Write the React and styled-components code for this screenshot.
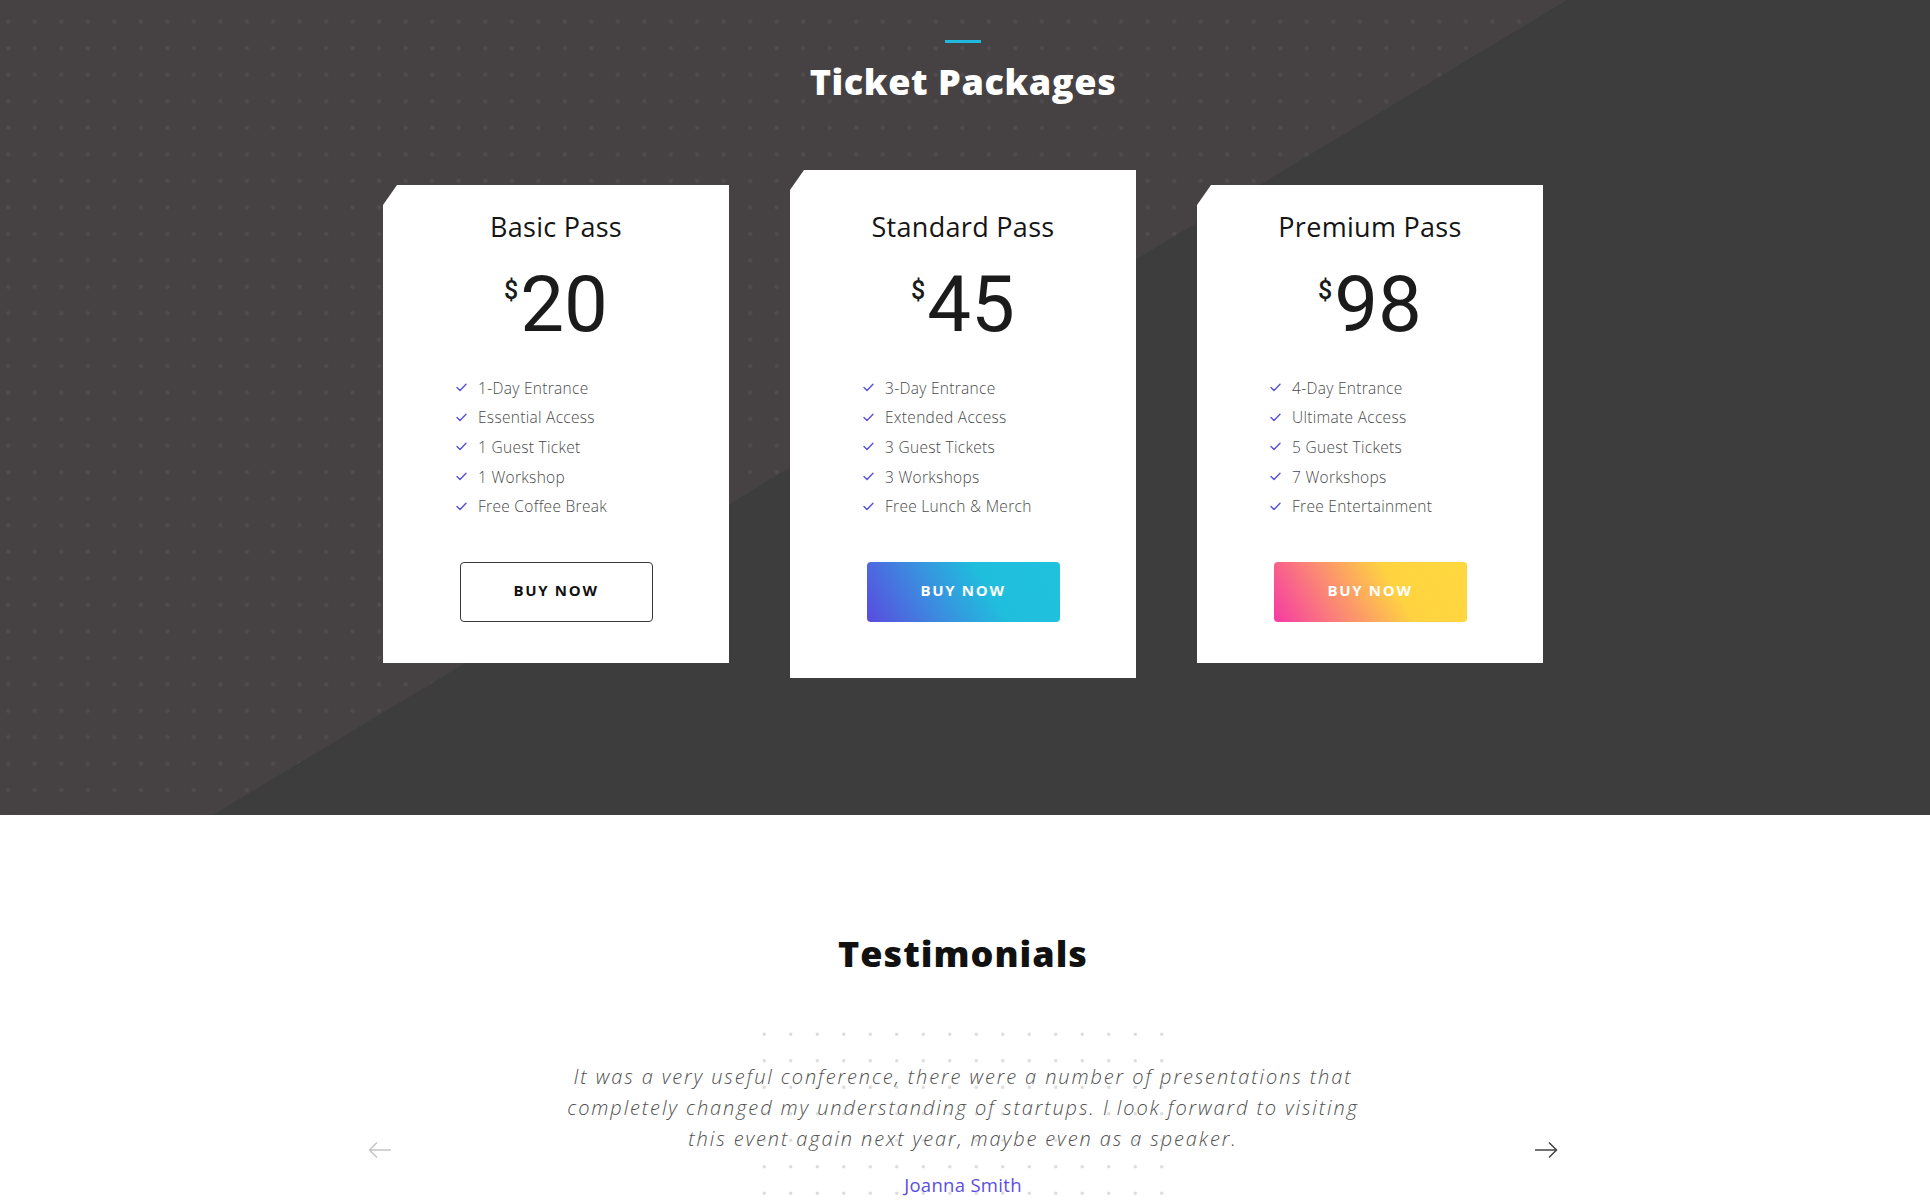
import React from "react";
import styled, { createGlobalStyle } from "styled-components";

const GlobalStyle = createGlobalStyle`
  html, body {
    margin: 0;
    padding: 0;
    background: #fff;
  }
  body {
    font-family: "Open Sans", "Liberation Sans", sans-serif;
    -webkit-font-smoothing: antialiased;
  }
  * {
    box-sizing: border-box;
  }
`;

const packages = [
  {
    name: "Basic Pass",
    price: 20,
    variant: "outline",
    features: [
      "1-Day Entrance",
      "Essential Access",
      "1 Guest Ticket",
      "1 Workshop",
      "Free Coffee Break",
    ],
  },
  {
    name: "Standard Pass",
    price: 45,
    variant: "blue",
    featured: true,
    features: [
      "3-Day Entrance",
      "Extended Access",
      "3 Guest Tickets",
      "3 Workshops",
      "Free Lunch & Merch",
    ],
  },
  {
    name: "Premium Pass",
    price: 98,
    variant: "sunset",
    features: [
      "4-Day Entrance",
      "Ultimate Access",
      "5 Guest Tickets",
      "7 Workshops",
      "Free Entertainment",
    ],
  },
];

/* ---------- ticket packages ---------- */

const PricingSection = styled.section`
  position: relative;
  height: 815px;
  padding: 40px 4px 0 0;
  background: #3d3d3d;
  overflow: hidden;

  /* lighter dotted triangle behind the content */
  &::before {
    content: "";
    position: absolute;
    inset: 0;
    background-color: #464243;
    background-image: radial-gradient(circle, #514d4e 1.7px, transparent 2.4px);
    background-size: 26.5px 26.5px;
    background-position: -5px 8.5px;
    clip-path: polygon(0 0, 1567px 0, 213px 815px, 0 815px);
  }
`;

const Inner = styled.div`
  position: relative;
  z-index: 1;
  display: flex;
  flex-direction: column;
  align-items: center;
`;

const AccentBar = styled.span`
  display: block;
  width: 36px;
  height: 3px;
  background: #1fb9dd;
`;

const SectionTitle = styled.h2`
  margin: ${(p) => p.$mt || "0"} 0 0;
  font-size: 36px;
  line-height: 43px;
  font-weight: 800;
  letter-spacing: ${(p) => (p.$light ? "0.6px" : "1px")};
  color: ${(p) => (p.$light ? "#fff" : "#111")};
`;

const CardRow = styled.div`
  display: flex;
  align-items: center;
  justify-content: center;
  gap: 61px;
  margin-top: 67px;
`;

const Card = styled.div`
  width: 346px;
  background: #fff;
  padding: ${(p) => (p.$featured ? "40px 0 56px" : "25px 0 41px")};
  display: flex;
  flex-direction: column;
  align-items: center;
  clip-path: polygon(14px 0, 100% 0, 100% 100%, 0 100%, 0 20px);
`;

const CardTitle = styled.h3`
  margin: 0;
  font-size: 27px;
  line-height: 34px;
  font-weight: 500;
  letter-spacing: 0.3px;
  color: #151515;
`;

const Price = styled.div`
  display: flex;
  align-items: flex-start;
  margin-top: 23px;
  font-family: Roboto, "Liberation Sans", sans-serif;
  color: #1b1b1b;
`;

const Currency = styled.span`
  font-size: 25px;
  line-height: 25px;
  font-weight: 500;
  margin: 11px 2px 0 0;
`;

const Amount = styled.span`
  font-size: 78px;
  line-height: 76px;
  font-weight: 400;
`;

const FeatureList = styled.ul`
  align-self: stretch;
  list-style: none;
  margin: 30px 0 0;
  padding: 0 0 0 73px;
`;

const Feature = styled.li`
  display: flex;
  align-items: center;
  gap: 11px;
  height: 29.6px;
  font-size: 15.5px;
  font-weight: 300;
  letter-spacing: 0.3px;
  color: #4a4a4a;
`;

const buttonSkins = {
  outline: `
    background: #fff;
    border: 1px solid #3a3a3a;
    color: #111;
  `,
  blue: `
    background: linear-gradient(60deg, #5a4bdf 0%, #3a8fe0 35%, #1fbedd 62%, #1fc2dd 100%);
    border: none;
    color: #fff;
  `,
  sunset: `
    background: linear-gradient(60deg, #f63aa4 0%, #fb8a73 32%, #ffd340 62%, #ffd83e 100%);
    border: none;
    color: #fff;
  `,
};

const BuyButton = styled.button`
  width: 193px;
  height: 60px;
  margin-top: 41px;
  padding: 0 0 4px;
  border-radius: 4px;
  font-family: "Open Sans", "Liberation Sans", sans-serif;
  font-size: 15px;
  font-weight: 700;
  letter-spacing: 1.7px;
  cursor: pointer;
  ${(p) => buttonSkins[p.$variant]}
`;

const CheckIcon = () => (
  <svg width="11" height="9" viewBox="0 0 11 9" fill="none">
    <path d="M1 4.6 L4 7.6 L10 1.2" stroke="#5a50e0" strokeWidth="1.4" strokeLinecap="round" strokeLinejoin="round" />
  </svg>
);

/* ---------- testimonials ---------- */

const TestimonialSection = styled.section`
  padding: 117px 4px 0 0;
  background: #fff;
  display: flex;
  flex-direction: column;
  align-items: center;
`;

const Slider = styled.div`
  width: 1190px;
  margin-top: 86px;
  display: flex;
  justify-content: space-between;
  align-items: flex-start;
`;

const ArrowButton = styled.button`
  margin-top: 80px;
  padding: 0;
  border: none;
  background: none;
  color: ${(p) => (p.$dim ? "#c4c4c4" : "#444")};
  cursor: pointer;
  display: flex;
`;

const QuoteBlock = styled.div`
  position: relative;
  width: 810px;
  text-align: center;

  /* dotted square behind the quote */
  &::before {
    content: "";
    position: absolute;
    top: -40px;
    left: 50%;
    width: 424px;
    height: 200px;
    transform: translateX(-50%);
    background-image: radial-gradient(circle, #dcdcdc 1.5px, transparent 2px);
    background-size: 26.5px 26.5px;
  }
`;

const QuoteText = styled.p`
  position: relative;
  margin: 0;
  font-size: 20px;
  line-height: 31px;
  font-style: italic;
  font-weight: 300;
  letter-spacing: 1.9px;
  color: #505050;
`;

const Author = styled.div`
  position: relative;
  margin-top: 19px;
  font-size: 18.5px;
  line-height: 24px;
  letter-spacing: 0.3px;
  color: #5b4de0;
`;

const Arrow = ({ dir }) => (
  <svg width="24" height="18" viewBox="0 0 24 18" fill="none" stroke="currentColor" strokeWidth="1.5">
    {dir === "left" ? (
      <path d="M23 9 H1.5 M9 1.5 L1.5 9 L9 16.5" />
    ) : (
      <path d="M1 9 H22.5 M15 1.5 L22.5 9 L15 16.5" />
    )}
  </svg>
);

export default function App() {
  return (
    <>
      <GlobalStyle />
      <PricingSection>
        <Inner>
          <AccentBar />
          <SectionTitle $light $mt="17px">Ticket Packages</SectionTitle>
          <CardRow>
            {packages.map((pkg) => (
              <Card key={pkg.name} $featured={pkg.featured}>
                <CardTitle>{pkg.name}</CardTitle>
                <Price>
                  <Currency>$</Currency>
                  <Amount>{pkg.price}</Amount>
                </Price>
                <FeatureList>
                  {pkg.features.map((f) => (
                    <Feature key={f}>
                      <CheckIcon />
                      {f}
                    </Feature>
                  ))}
                </FeatureList>
                <BuyButton $variant={pkg.variant}>BUY NOW</BuyButton>
              </Card>
            ))}
          </CardRow>
        </Inner>
      </PricingSection>

      <TestimonialSection>
        <SectionTitle>Testimonials</SectionTitle>
        <Slider>
          <ArrowButton $dim aria-label="Previous">
            <Arrow dir="left" />
          </ArrowButton>
          <QuoteBlock>
            <QuoteText>
              It was a very useful conference, there were a number of presentations that
              completely changed my understanding of startups. I look forward to visiting
              this event again next year, maybe even as a speaker.
            </QuoteText>
            <Author>Joanna Smith</Author>
          </QuoteBlock>
          <ArrowButton aria-label="Next">
            <Arrow dir="right" />
          </ArrowButton>
        </Slider>
      </TestimonialSection>
    </>
  );
}
